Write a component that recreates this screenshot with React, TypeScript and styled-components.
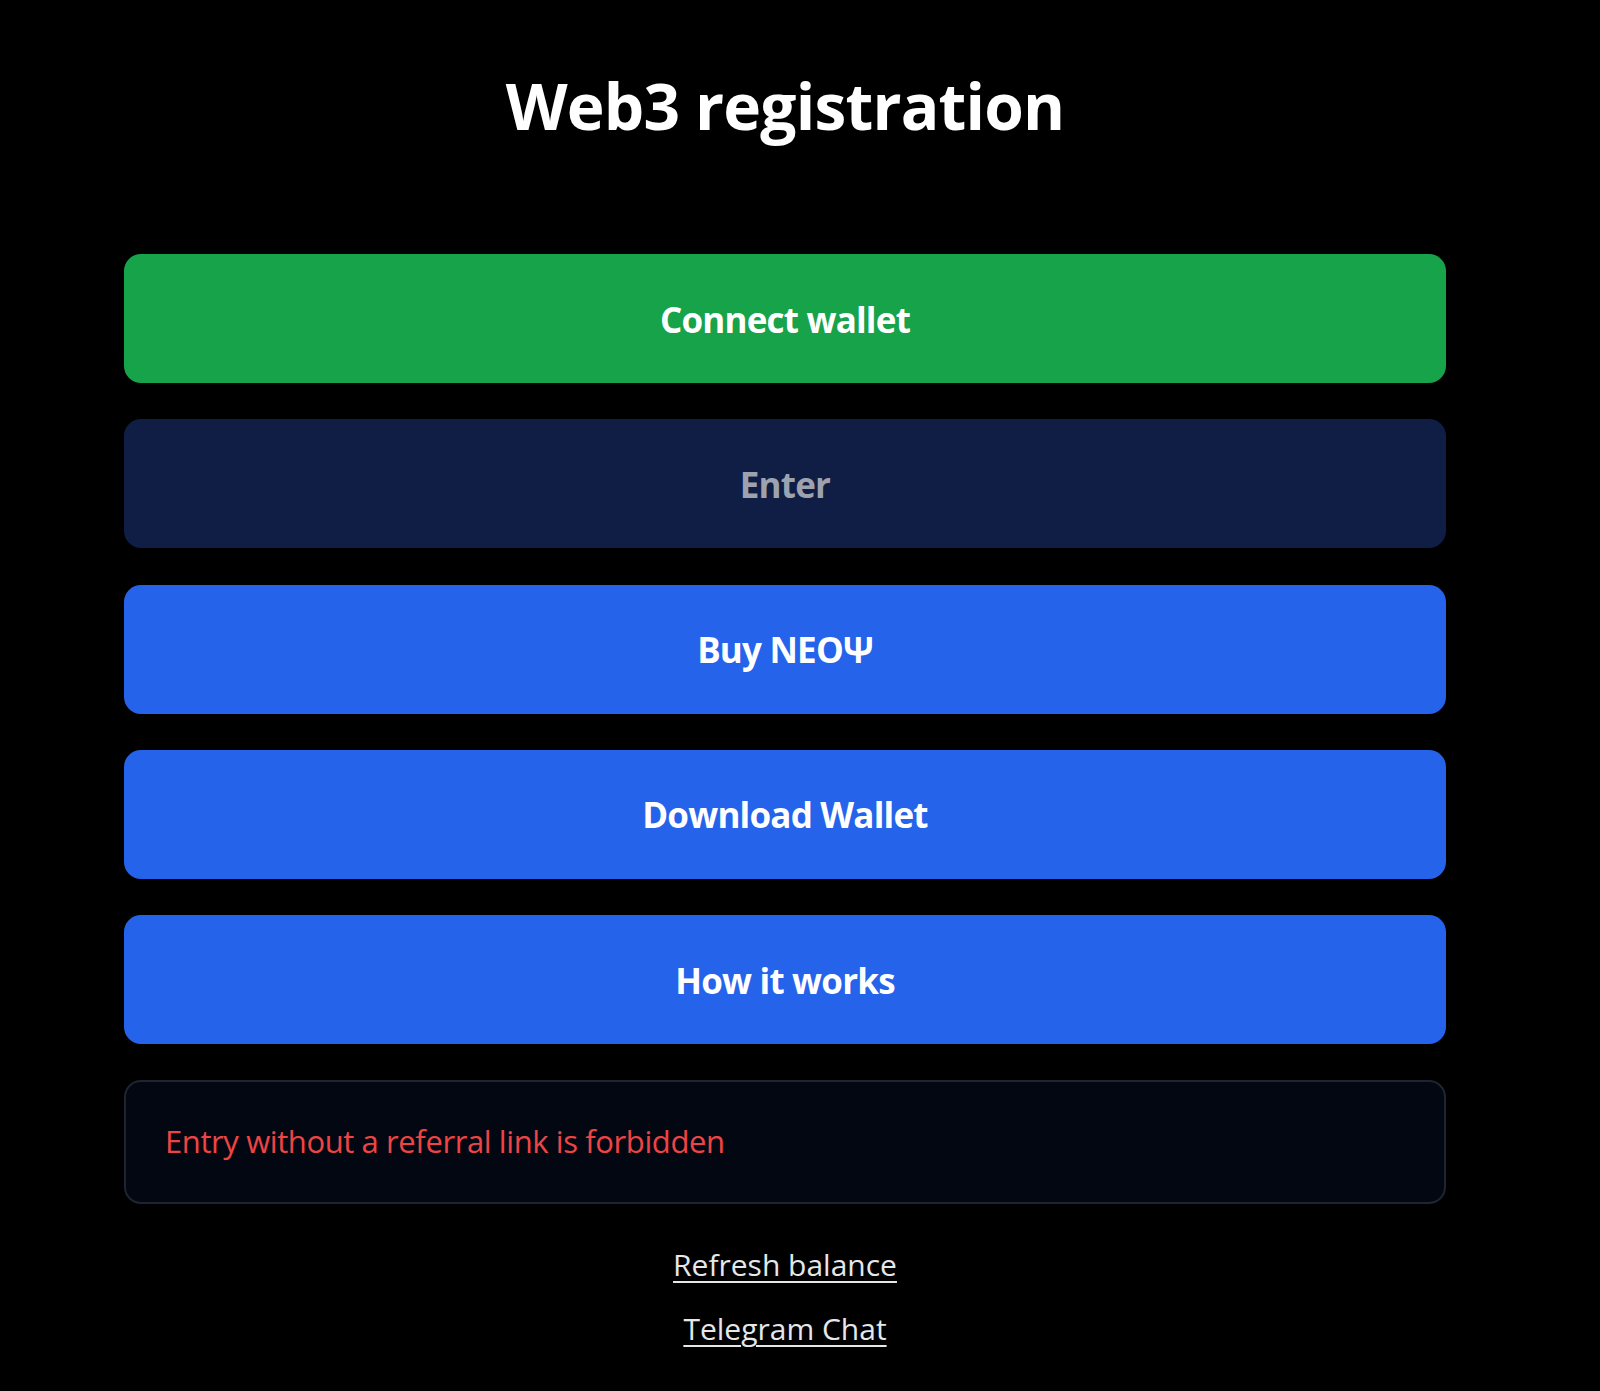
import styled, {createGlobalStyle} from "styled-components";

type ButtonVariant = "green" | "muted" | "blue";

const GlobalStyle = createGlobalStyle`
    html, body {
        margin: 0;
        padding: 0;
        background: #000;
    }

    body {
        font-family: "Open Sans", "Noto Sans", sans-serif;
        color: #fff;
    }
`;

const buttonColors: Record<ButtonVariant, {bg: string; fg: string}> = {
    green: {bg: "#16a34a", fg: "#ffffff"},
    muted: {bg: "#101d45", fg: "#9ca3af"},
    blue: {bg: "#2563eb", fg: "#ffffff"},
};

const actions: {label: string; variant: ButtonVariant}[] = [
    {label: "Connect wallet", variant: "green"},
    {label: "Enter", variant: "muted"},
    {label: "Buy NEOΨ", variant: "blue"},
    {label: "Download Wallet", variant: "blue"},
    {label: "How it works", variant: "blue"},
];

const App = () => {
    return (
        <>
            <GlobalStyle />
            <Page>
                <Title>Web3 registration</Title>

                <Actions>
                    {actions.map((action) => (
                        <ActionButton key={action.label} variant={action.variant}>
                            {action.label}
                        </ActionButton>
                    ))}

                    <Notice>Entry without a referral link is forbidden</Notice>
                </Actions>

                <Links>
                    <TextLink href="#">Refresh balance</TextLink>
                    <TextLink href="#">Telegram Chat</TextLink>
                </Links>
            </Page>
        </>
    );
};

const Page = styled.main`
    width: 1322px;
    margin-left: 124px;
    padding-top: 58px;
    padding-bottom: 40px;
    display: flex;
    flex-direction: column;
    align-items: stretch;
`;

const Title = styled.h1`
    margin: 0;
    text-align: center;
    font-size: 64px;
    line-height: 96px;
    font-weight: 700;
    letter-spacing: -0.8px;
    color: #ffffff;
`;

const Actions = styled.div`
    margin-top: 100px;
    display: flex;
    flex-direction: column;
    gap: 36.3px;
`;

const ActionButton = styled.button<{variant: ButtonVariant}>`
    height: 129px;
    border: none;
    border-radius: 17px;
    background: ${(p) => buttonColors[p.variant].bg};
    color: ${(p) => buttonColors[p.variant].fg};
    font-family: "Open Sans", "Noto Sans", sans-serif;
    font-size: 35px;
    font-weight: 700;
    letter-spacing: -0.8px;
    padding-top: 2px;
    cursor: pointer;
`;

const Notice = styled.div`
    height: 124px;
    box-sizing: border-box;
    display: flex;
    align-items: center;
    padding: 0 38px 2px 39px;
    border: 2px solid #1f2430;
    border-radius: 17px;
    background: #030712;
    color: #ef4444;
    font-size: 31px;
    letter-spacing: -0.4px;
`;

const Links = styled.div`
    margin-top: 38px;
    display: flex;
    flex-direction: column;
    align-items: center;
    gap: 19px;
`;

const TextLink = styled.a`
    color: #e5e7eb;
    font-size: 30px;
    line-height: 45px;
    text-decoration: underline;
    text-decoration-thickness: 2px;
    text-underline-offset: 5px;
`;

export default App;
